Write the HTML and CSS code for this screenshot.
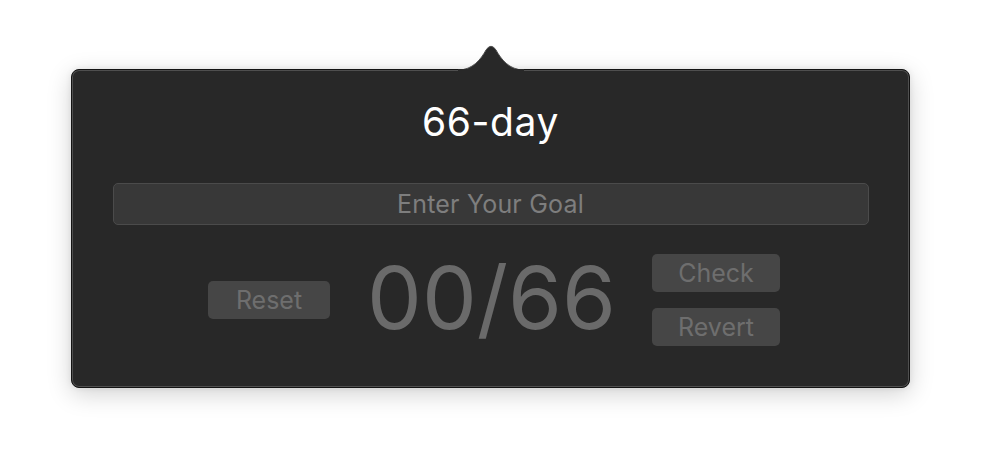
FILE: index.html
```html
<!DOCTYPE html>
<html>
<head>
<meta charset="utf-8">
<link rel="stylesheet" href="styles.css">
</head>
<body>
<div class="stage">
  <div class="popover">
    <svg class="arrow" width="66" height="27" viewBox="0 0 66 27">
      <path d="M0,26 C15,26 23,15 28,6 Q33,-1.5 38,6 C43,15 51,26 66,26 Z" fill="#282828" stroke="#505050" stroke-width="1"/>
      <rect x="0" y="25" width="66" height="3" fill="#282828"/>
    </svg>
    <h1 class="title">66-day</h1>
    <div class="field">Enter Your Goal</div>
    <div class="row">
      <button class="btn reset">Reset</button>
      <div class="counter">00/66</div>
      <div class="stack">
        <button class="btn">Check</button>
        <button class="btn">Revert</button>
      </div>
    </div>
  </div>
</div>
</body>
</html>
```

FILE: styles.css
```css
html, body {
  margin: 0;
  padding: 0;
  background: #ffffff;
}
.stage {
  width: 982px;
  height: 468px;
  padding: 69px 0 0 71px;
  box-sizing: border-box;
}
.popover {
  position: relative;
  width: 839px;
  height: 319px;
  box-sizing: border-box;
  background: #282828;
  border: 1px solid #141414;
  border-radius: 8px;
  box-shadow: inset 0 0 0 1px #4f4f4f, 0 6px 24px rgba(0,0,0,0.18), 0 0 6px rgba(0,0,0,0.08);
  display: flex;
  flex-direction: column;
  align-items: center;
  font-family: Inter, "Liberation Sans", sans-serif;
}
.arrow {
  position: absolute;
  left: 386px;
  top: -26px;
  overflow: visible;
}
.title {
  margin: 29px 0 0 0;
  font-size: 39px;
  line-height: 46px;
  font-weight: 400;
  color: #ffffff;
  letter-spacing: 0.6px;
}
.field {
  margin-top: 38px;
  width: 756px;
  height: 42px;
  box-sizing: border-box;
  background: #383838;
  border: 1px solid #4b4b4b;
  border-radius: 5px;
  color: #7e7e7e;
  font-size: 25px;
  line-height: 40px;
  text-align: center;
  letter-spacing: 0.2px;
}
.row {
  margin-top: 29px;
  display: flex;
  align-items: center;
  margin-left: 7px;
}
.btn {
  display: block;
  width: 122px;
  height: 38px;
  margin: 0;
  padding: 0;
  border: none;
  border-radius: 5px;
  background: #464646;
  color: #6e6e6e;
  font-family: Inter, "Liberation Sans", sans-serif;
  font-size: 25px;
  line-height: 38px;
  text-align: center;
}
.reset {
  margin-right: 38px;
}
.counter {
  width: 244px;
  text-align: center;
  font-size: 87px;
  line-height: 92px;
  color: #6a6a6a;
  margin-right: 40px;
  margin-top: -4px;
  text-indent: -1px;
}
.stack {
  display: flex;
  flex-direction: column;
  gap: 16px;
}
.stack .btn {
  width: 128px;
}
```
